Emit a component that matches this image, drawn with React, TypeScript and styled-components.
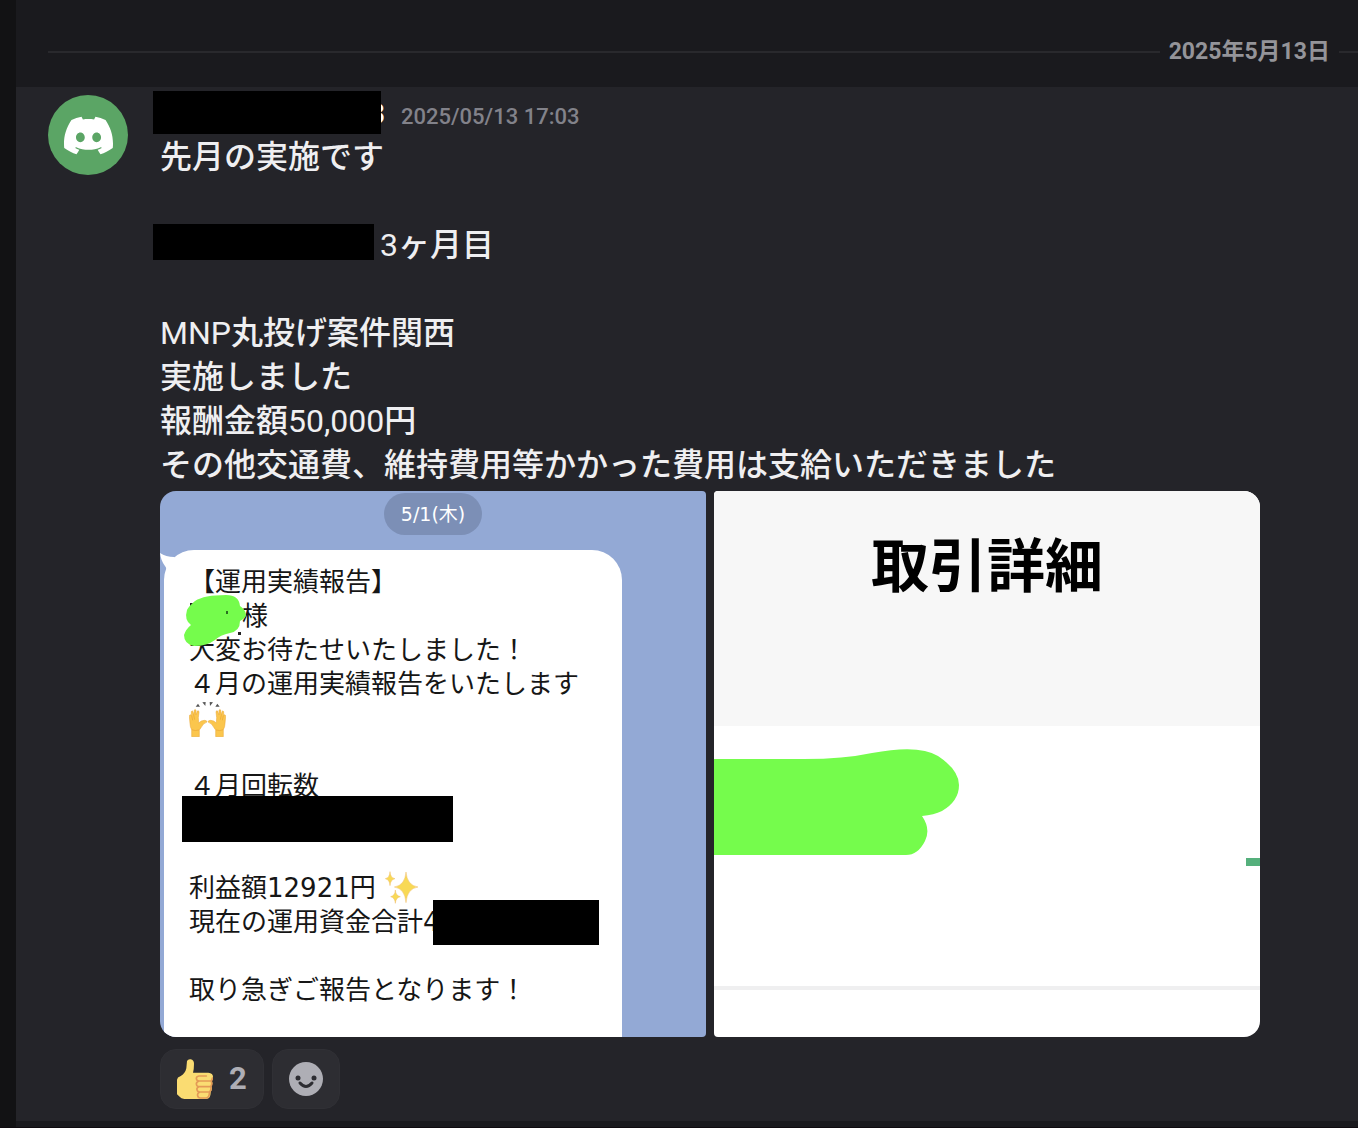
import React from "react";
import styled, { createGlobalStyle } from "styled-components";
import { SiDiscord } from "react-icons/si";

const GlobalStyle = createGlobalStyle`
  * { box-sizing: border-box; }
  body {
    margin: 0;
    background: #0f0b10;
    color: #efeff1;
    font-family: Roboto, "Noto Sans CJK JP", sans-serif;
  }
`;

const Shell = styled.div`
  display: grid;
  grid-template-columns: 16px minmax(0, 1fr);
`;

const Rail = styled.div`
  background: #121214;
`;

const Chat = styled.main`
  background: #1a1a1e;
  padding-bottom: 6px;
`;

const DateDivider = styled.div`
  display: flex;
  align-items: center;
  gap: 9px;
  height: 87px;
  padding: 16px 0 0 32px;

  &::before,
  &::after {
    content: "";
    height: 2px;
    background: #29292d;
  }
  &::before { flex: 1; }
  &::after { width: 19px; }
`;

const DateLabel = styled.time`
  color: #949499;
  font-size: 23px;
  font-weight: 700;
  line-height: 28px;
`;

const Message = styled.article`
  display: flex;
  gap: 32px;
  padding: 3px 32px 12px;
  background: #242429;
`;

const Avatar = styled.div`
  display: flex;
  flex: none;
  align-items: center;
  justify-content: center;
  width: 80px;
  height: 80px;
  margin-top: 5px;
  border-radius: 50%;
  background: #5ba565;
  color: #fff;
`;

const Content = styled.div`
  flex: 1;
  min-width: 0;
`;

const Header = styled.header`
  display: flex;
  align-items: baseline;
  gap: 16px;
  height: 45px;
`;

const Redacted = styled.span<{ $width: number }>`
  position: relative;
  display: inline-block;
  width: ${(p) => p.$width}px;
  text-align: right;
`;

const Bar = styled.span<{ $left: number; $top: number; $width: number; $height: number }>`
  position: absolute;
  left: ${(p) => p.$left}px;
  top: ${(p) => p.$top}px;
  width: ${(p) => p.$width}px;
  height: ${(p) => p.$height}px;
  background: #000;
`;

const Author = styled.h2`
  margin: 0;
  color: #fff;
  font-size: 30px;
  font-weight: 700;
  line-height: 48px;
`;

const Timestamp = styled.time`
  color: #82828a;
  font-size: 22px;
  font-weight: 500;
`;

const Text = styled.div`
  font-size: 32px;
  font-weight: 500;
  line-height: 44px;
`;

const Line = styled.p`
  min-height: 44px;
  margin: 0;
`;

const Latin = styled.span`
  font-weight: 400;
`;

const Gallery = styled.div`
  display: grid;
  grid-template-columns: 1fr 1fr;
  gap: 8px;
  max-width: 1100px;
  margin-top: 4px;
  border-radius: 16px;
  overflow: hidden;
`;

const Tile = styled.figure<{ $color: string }>`
  position: relative;
  aspect-ratio: 1;
  margin: 0;
  border-radius: 4px;
  overflow: hidden;
  background: ${(p) => p.$color};
`;

const DatePill = styled.div`
  width: 98px;
  margin: 2px auto 0;
  border-radius: 21px;
  background: #7c8fb6;
  color: #fff;
  font: 19px/42px "DejaVu Sans", "Noto Sans CJK JP", sans-serif;
  text-align: center;
`;

const Bubble = styled.div`
  width: 458px;
  height: 100%;
  margin: 15px 0 0 4px;
  padding: 15px 0 0 25px;
  border-radius: 30px 30px 0 0;
  background: #fff;
  color: #161616;
  font: 26px/34px "DejaVu Sans", "Noto Sans CJK JP", sans-serif;
  font-weight: 400;
  white-space: nowrap;
`;

const BubbleLine = styled.p<{ $indent?: number }>`
  position: relative;
  height: 34px;
  margin: 0;
  padding-left: ${(p) => p.$indent ?? 0}px;

  svg { vertical-align: top; }
  span + svg { margin-left: 8px; }
`;

const Overlay = styled.svg<{ $left: number; $top: number }>`
  position: absolute;
  left: ${(p) => p.$left}px;
  top: ${(p) => p.$top}px;
`;

const DetailHead = styled.div`
  height: 235px;
  padding-top: 42px;
  background: #f7f7f7;
  color: #000;
  font: 700 58px/58px "Noto Sans CJK JP", sans-serif;
  text-align: center;
`;

const DetailBody = styled.div`
  height: 264px;
  border-bottom: 4px solid #efeff0;
`;

const Reactions = styled.div`
  display: flex;
  gap: 8px;
  margin-top: 12px;
`;

const Reaction = styled.button`
  display: flex;
  align-items: center;
  gap: 16px;
  height: 60px;
  padding: 0 16px;
  border: 1px solid #303035;
  border-radius: 16px;
  background: #2d2d32;
  color: #aeaeb5;
  font: 700 31px/40px Roboto, sans-serif;
`;

function ThumbsUp() {
  return (
    <svg width="36" height="40" viewBox="0 0 108 120" aria-hidden="true">
      <path fill="#fadc72" d="M30 6Q33 0 41 1Q51 3 51 14Q51 30 48 41H94Q108 43 108 53Q108 60 104 64Q109 74 103 81Q107 92 101 98Q102 119 88 120H22Q12 119 8 113L0 106V62Q1 55 10 52Q25 43 28 28Z" />
      <path fill="none" stroke="#e39a56" strokeWidth="5" strokeLinecap="round" d="M88 51H66Q58 52 58 59Q59 66 66 66H103M66 66Q58 69 58 75Q59 83 66 83H102M66 83Q58 86 60 92Q61 99 68 99H99M68 99Q60 103 62 110Q63 117 70 117H88Q97 115 97 103M106 57Q106 63 102 66Q107 76 101 82Q104 93 98 98" />
    </svg>
  );
}

function Smile() {
  return (
    <svg width="34" height="34" viewBox="0 0 34 34" aria-hidden="true">
      <circle cx="17" cy="17" r="17" fill="#aeaeb5" />
      <circle cx="9" cy="16" r="2.5" fill="#2d2d32" />
      <circle cx="25" cy="16" r="2.5" fill="#2d2d32" />
      <path d="M11 21Q17 28 23 21" fill="none" stroke="#2d2d32" strokeWidth="3" strokeLinecap="round" />
    </svg>
  );
}

const HAND =
  "M8 107V86Q3 77 3 68L1 46Q1 41 5 41L7 44L7 32Q9 27 12 32L14 42L16 27Q19 23 21 28V42L25 30Q29 27 30 33L28 50L29 66Q36 58 46 58Q54 58 54 63Q42 67 36 80L31 87V107Z";

function RaisedHands() {
  return (
    <svg width="37" height="36" viewBox="0 0 111 108" role="img" aria-label="🙌">
      <g fill="#fbc64d" stroke="#e8a535" strokeWidth="1.5">
        <path d={HAND} />
        <path d={HAND} transform="translate(111 0) scale(-1 1)" />
      </g>
      <path fill="none" stroke="#e8a535" strokeWidth="2" d="M8 86Q18 91 30 87M103 86Q93 91 81 87M8 44L11 58M14 42L17 56M103 44L100 58M97 42L94 56" />
      <path fill="#555" d="M20 17L27 8L33 17ZM40 4L50 3L49 15ZM62 3L72 4L63 15ZM79 17L85 8L92 17Z" />
    </svg>
  );
}

function Sparkles() {
  return (
    <svg width="35" height="34" viewBox="0 0 105 102" role="img" aria-label="✨">
      <g fill="#f8d955" stroke="#efbd6c" strokeWidth="1.5">
        <path d="M66 3Q69 43 102 48Q69 53 66 95Q63 53 31 48Q63 43 66 3Z" />
        <path d="M18 2Q19 20 33 23Q19 26 18 44Q17 26 4 23Q17 20 18 2Z" />
        <path d="M34 57Q35 74 49 77Q35 80 34 97Q33 80 20 77Q33 74 34 57Z" />
      </g>
    </svg>
  );
}

function ReportPicture() {
  return (
    <Tile $color="#93a9d5">
      <DatePill>5/1(木)</DatePill>
      <Bubble>
        <BubbleLine>【運用実績報告】</BubbleLine>
        <BubbleLine $indent={53}>様</BubbleLine>
        <BubbleLine>大変お待たせいたしました！</BubbleLine>
        <BubbleLine>４月の運用実績報告をいたします</BubbleLine>
        <BubbleLine><RaisedHands /></BubbleLine>
        <BubbleLine />
        <BubbleLine>４月回転数</BubbleLine>
        <BubbleLine><Bar $left={-7} $top={-7} $width={271} $height={46} /></BubbleLine>
        <BubbleLine />
        <BubbleLine><span>利益額12921円</span><Sparkles /></BubbleLine>
        <BubbleLine>
          現在の運用資金合計4
          <Bar $left={244} $top={-5} $width={166} $height={45} />
        </BubbleLine>
        <BubbleLine />
        <BubbleLine>取り急ぎご報告となります！</BubbleLine>
      </Bubble>
      <Overlay $left={0} $top={60} width="30" height="30" viewBox="0 0 30 30" aria-hidden="true">
        <path fill="#fff" d="M0 2Q6 6 14 6L24 12L8 26Q7 17 5 15Q1 10 0 2Z" />
      </Overlay>
      <Overlay $left={22} $top={102} width="68" height="56" viewBox="0 0 68 56" aria-hidden="true">
        <path fill="#222" d="M8 10h3v3h-3zM56 39h3v3h-3zM9 31h2v4h-2z" />
        <path fill="#75fc4c" d="M13 8Q22 2 44 2Q57 2 58 13Q64 17 64 23Q62 26 58 28Q58 38 48 40Q38 42 33 47Q25 53 12 53Q2 51 2 42Q4 36 9 32Q2 27 5 17Q7 13 13 8Z" />
        <path fill="#287020" d="M44 18h2v3h-2z" />
      </Overlay>
    </Tile>
  );
}

function DetailPicture() {
  return (
    <Tile $color="#fff">
      <DetailHead>取引詳細</DetailHead>
      <DetailBody />
      <Overlay $left={0} $top={256} width="250" height="110" viewBox="0 0 250 110" aria-hidden="true">
        <path fill="#75fc4c" d="M0 12H90Q130 12 158 6Q205 -3 224 9Q245 23 245 38Q245 54 228 64Q220 68 208 69Q217 82 211 94Q204 108 192 108H0Z" />
      </Overlay>
      <Overlay $left={532} $top={367} width="14" height="8" viewBox="0 0 14 8" aria-hidden="true">
        <path fill="#55b07c" d="M0 0H14V8H0Z" />
      </Overlay>
    </Tile>
  );
}

export default function App() {
  return (
    <>
      <GlobalStyle />
      <Shell>
        <Rail />
        <Chat>
          <DateDivider>
            <DateLabel dateTime="2025-05-13">2025年5月13日</DateLabel>
          </DateDivider>
          <Message>
            <Avatar><SiDiscord size={49} aria-hidden="true" /></Avatar>
            <Content>
              <Header>
                <Author>
                  <Redacted $width={225}>
                    3
                    <Bar $left={-7} $top={1} $width={228} $height={43} />
                  </Redacted>
                </Author>
                <Timestamp dateTime="2025-05-13T17:03">2025/05/13 17:03</Timestamp>
              </Header>
              <Text>
                <Line>先月の実施です</Line>
                <Line />
                <Line>
                  <Redacted $width={220}>
                    &nbsp;
                    <Bar $left={-7} $top={1} $width={221} $height={36} />
                  </Redacted>
                  <Latin>3</Latin>ヶ月目
                </Line>
                <Line />
                <Line><Latin>MNP</Latin>丸投げ案件関西</Line>
                <Line>実施しました</Line>
                <Line>報酬金額<Latin>50,000</Latin>円</Line>
                <Line>その他交通費、維持費用等かかった費用は支給いただきました</Line>
              </Text>
              <Gallery>
                <ReportPicture />
                <DetailPicture />
              </Gallery>
              <Reactions>
                <Reaction type="button" aria-label="👍 2"><ThumbsUp />2</Reaction>
                <Reaction type="button" aria-label="リアクションを付ける"><Smile /></Reaction>
              </Reactions>
            </Content>
          </Message>
        </Chat>
      </Shell>
    </>
  );
}
